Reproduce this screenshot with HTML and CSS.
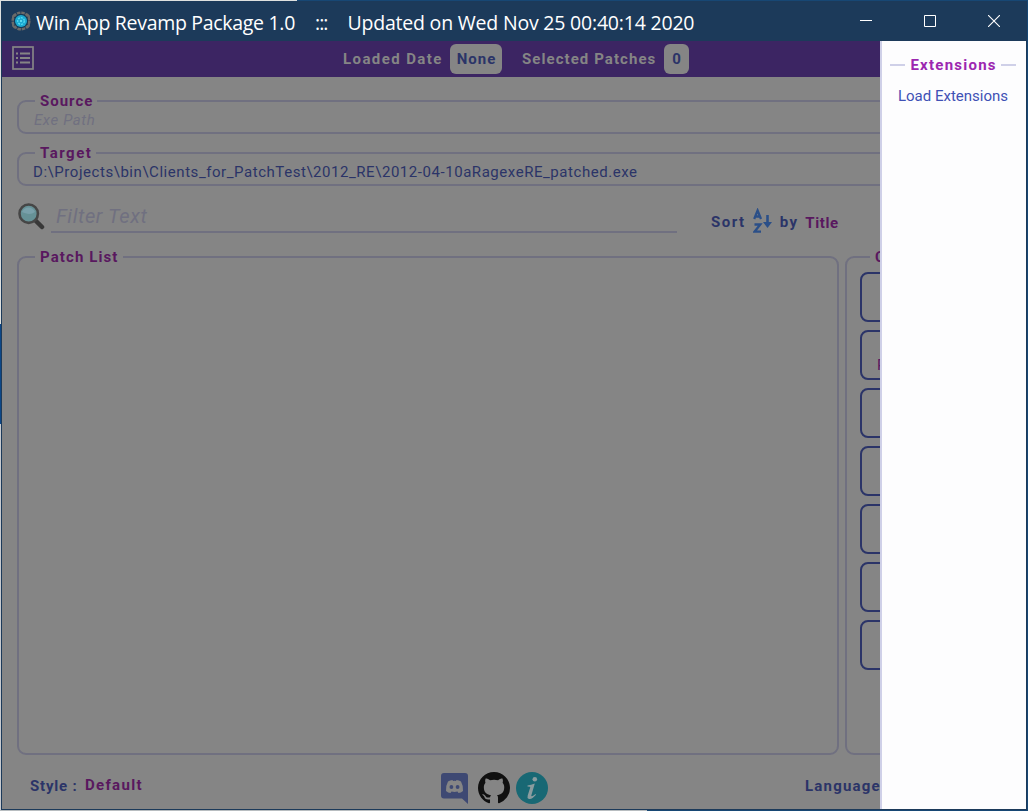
FILE: index.html
```html
<!DOCTYPE html>
<html lang="en">
<head>
<meta charset="utf-8">
<title>Win App Revamp Package 1.0</title>
<link rel="stylesheet" href="styles.css">
</head>
<body>
<div class="desktop-top"></div><div class="desktop-left"></div><div class="desktop-bottom"></div>
<div class="window">
  <header class="titlebar">
    <svg class="app-icon" width="20" height="20" viewBox="0 0 20 20"><circle cx="10" cy="10" r="8.300" fill="none" stroke="#6c6b69" stroke-width="2.600" stroke-dasharray="3.500 .85"/><path d="M4 3L2 5V8M16 3L18 5V8M4 17L2 15V12M16 17L18 15V12" fill="none" stroke="#6c6b69" stroke-width="1.800"/><circle cx="10" cy="10" r="7" fill="#143a55"/><circle cx="10" cy="10" r="6" fill="#1ba9d1"/><circle cx="10" cy="10" r="3.3" fill="none" stroke="#55dcf2" stroke-width="1.3" stroke-dasharray="2 1"/><circle cx="10" cy="10" r="1" fill="#6feafa"/></svg>
    <span class="t title-a">Win App Revamp Package 1.0</span><span class="t title-b">:::</span><span class="t title-c">Updated on Wed Nov 25 00:40:14 2020</span>
    <div class="controls">
      <svg width="12" height="12" viewBox="0 0 12 12"><path d="M0 5.5H12" stroke="#fff"/></svg>
      <svg width="12" height="12" viewBox="0 0 12 12"><path d="M.5 .5h11v11H.5z" fill="none" stroke="#fff"/></svg>
      <svg width="12" height="12" viewBox="0 0 12 12"><path d="M0 0L12 12M12 0L0 12" stroke="#fff" stroke-width="1.1"/></svg>
    </div>
  </header>
  <div class="body">
    <nav class="toolbar">
      <svg class="menu-icon" width="22" height="24" viewBox="0 0 22 24"><rect x="1" y="1" width="20" height="22" fill="none" stroke="#858585" stroke-width="1.7"/><path d="M8 7.5H18M8 12H18M8 16.5H18M4 7.5H6M4 12H6M4 16.5H6" stroke="#858585" stroke-width="1.8"/></svg>
      <span class="t bold loaded">Loaded Date</span><span class="chip chip-a"><span class="t bold none">None</span></span>
      <span class="t bold selected">Selected Patches</span><span class="chip chip-b"><span class="t bold">0</span></span>
    </nav>
    <main class="content">
      <fieldset class="field"><legend class="bold"><span class="t source">Source</span></legend><span class="t hint">Exe Path</span></fieldset>
      <fieldset class="field"><legend class="bold"><span class="t target">Target</span></legend><span class="t path">D:\Projects\bin\Clients_for_PatchTest\2012_RE\2012-04-10aRagexeRE_patched.exe</span></fieldset>
      <div class="filter-row">
        <svg class="search" width="27" height="27" viewBox="0 0 27 27"><path d="M17.5 17.5L24 24" stroke="#383838" stroke-width="4.5" stroke-linecap="round"/><circle cx="10.7" cy="10.7" r="9.2" fill="#669196" stroke="#464646" stroke-width="2.6"/><path d="M4 9c2-6 11-6 13 0-4 3-9 2-13 0z" fill="#79a0aa"/></svg>
        <div class="filter"><span class="t">Filter Text</span></div>
        <div class="sort bold"><span class="t sort-l">Sort</span>
          <svg width="19" height="26" viewBox="0 0 19 26"><path d="M1.2 11L4.6 2.500L8 11M2.3 8.500H7M1.5 16.500H7.3L1.6 23.7H8" fill="none" stroke="#2b4f88" stroke-width="2.3"/><path d="M14.5 7V17" stroke="#2b4f88" stroke-width="2.6"/><path d="M10 14h9l-4.500 6z" fill="#2b4f88"/></svg>
          <span class="t by">by</span><span class="t by-title">Title</span></div>
      </div>
      <div class="panels">
        <fieldset class="panel"><legend class="bold"><span class="t patch">Patch List</span></legend></fieldset>
        <fieldset class="panel actions"><legend class="bold">C</legend>
          <div class="buttons"><div class="btn"></div><div class="btn"><span>P</span></div><div class="btn"></div><div class="btn"></div><div class="btn"></div><div class="btn"></div><div class="btn"></div></div>
        </fieldset>
      </div>
      <footer class="footer bold">
        <span class="t style-l">Style :</span><span class="t default">Default</span>
        <div class="links">
          <svg width="27" height="32" viewBox="0 0 27 32"><path d="M3 1H24Q27 1 27 4V32L21 26.500H3Q0 26.500 0 23.500V4Q0 1 3 1Z" fill="#3e4973"/><path d="M7 9.500Q9 8 11.500 8L12 9Q13.500 8.700 15 9L15.500 8Q18 8 20 9.500Q22.500 14 22 19Q20 21 17.500 21L16.500 19.500Q13.500 20.300 10.500 19.500L9.500 21Q7 21 5 19Q4.500 14 7 9.500Z" fill="#858585"/><circle cx="10.400" cy="15" r="1.900" fill="#3e4973"/><circle cx="16.600" cy="15" r="1.900" fill="#3e4973"/></svg>
          <svg width="32" height="32" viewBox="0 0 16 16"><path fill="#101010" d="M8 0C3.580 0 0 3.580 0 8c0 3.540 2.290 6.530 5.470 7.590.4.070.55-.17.55-.38 0-.19-.01-.82-.01-1.490-2.010.37-2.530-.49-2.690-.94-.09-.23-.48-.94-.82-1.130-.28-.15-.68-.52-.01-.53.63-.01 1.080.58 1.230.82.72 1.210 1.870.87 2.330.66.07-.52.28-.87.51-1.070-1.780-.2-3.640-.89-3.640-3.950 0-.87.31-1.590.82-2.150-.08-.2-.36-1.020.08-2.120 0 0 .67-.21 2.200.82.64-.18 1.320-.27 2-.27s1.360.09 2 .27c1.530-1.040 2.200-.82 2.200-.82.44 1.100.16 1.920.08 2.120.51.56.82 1.270.82 2.150 0 3.070-1.870 3.750-3.650 3.950.29.25.54.73.54 1.480 0 1.070-.01 1.930-.01 2.200 0 .21.15.46.55.38A8.010 8.010 0 0 0 16 8c0-4.420-3.580-8-8-8z"/></svg>
          <svg width="32" height="32" viewBox="0 0 32 32"><circle cx="16" cy="16" r="16" fill="#186874"/><circle cx="18.800" cy="7.300" r="2.300" fill="#8a9c9f"/><path d="M11.500 13.500Q15 13 18.800 11.500L15.300 23.500Q15 25.500 19.500 22L20 22.700Q15.500 28 12.500 26.700Q11 26 11.700 23.500L14.200 15.500Q14.500 14.500 11.500 14.500Z" fill="#8a9c9f"/></svg>
        </div>
        <span class="t language">Language :</span>
      </footer>
    </main>
    <aside class="drawer"><div class="heading bold"><i></i><span class="t ext">Extensions</span><i></i></div><span class="t load">Load Extensions</span></aside>
  </div>
</div>
</body>
</html>
```
FILE: styles.css
```css
* { box-sizing: border-box; }
body { margin: 0; width: 1028px; height: 811px; padding: 1px; overflow: hidden; background: #174774; font-family: Roboto, "Liberation Sans", sans-serif; font-size: 15px; position: relative; }
.t { white-space: nowrap; }
.bold { font-weight: 700; }
.desktop-top { position: absolute; left: 0; top: 0; width: 297px; height: 1px; background: #dfe1df; }
.desktop-left { position: absolute; left: 0; top: 0; width: 1px; height: 811px; background: linear-gradient(#dfe1df 324px, #0c4788 324px 424px, #c8cbd0 424px); }
.desktop-bottom { position: absolute; left: 0; top: 810px; width: 647px; height: 1px; background: #b8bdc0; }
.window { position: relative; width: 1026px; height: 809px; border: 1px solid #1c3a5a; border-top: 0; background: #858585; }
.titlebar { height: 40px; background: #1c3a5a; color: #fff; display: flex; align-items: center; font: 19.5px/38px "Open Sans", sans-serif; padding: 4px 26px 0 9px; }
.app-icon { margin: -4px 5px 0 0; }
.title-a { letter-spacing: -.3px; }
.title-b { margin-left: 20px; letter-spacing: -1px; }
.title-c { margin-left: 20px; letter-spacing: -.2px; }
.controls { display: flex; gap: 52px; margin: -4px 0 0 auto; }
.body { position: relative; height: 768px; overflow: hidden; }
.toolbar { height: 36px; background: #3c2563; color: #858585; display: flex; align-items: center; padding-left: 10px; }
.menu-icon { margin-bottom: 2px; }
.loaded { margin-left: 309px; letter-spacing: 1.4px; }
.none { letter-spacing: 1px; margin-right: -1px; }
.selected { letter-spacing: 1.07px; }
.chip { height: 30px; border-radius: 6px; background: #858585; color: #2b3468; display: flex; align-items: center; justify-content: center; }
.chip-a { width: 52px; margin: 0 20px 0 7.3px; }
.chip-b { width: 25px; margin-left: 7.6px; }
.content { padding: 16px 15px 0; }
fieldset { margin: 0; min-width: 0; border: 2px solid #707080; border-radius: 9px; padding: 0; }
legend { margin-left: 16px; padding: 0 4px 0 5px; line-height: 16px; color: #59185f; }
.field { height: 41px; padding-left: 14px; line-height: 22px; margin-bottom: 11px; color: #2b3468; }
.field legend { margin-left: 2px; }
.source { letter-spacing: 1px; }
.target { letter-spacing: 1.5px; }
.patch { letter-spacing: 1.1px; }
.path { letter-spacing: .55px; }
.hint { font-style: italic; color: #707080; letter-spacing: .6px; margin-left: 1px; }
.filter-row { height: 52px; display: flex; padding-top: 7px; }
.search { margin: -1px 0 0 .5px; }
.filter { width: 626px; height: 29px; margin-left: 6.5px; padding-left: 5px; border-bottom: 2px solid #707080; font-size: 20px; line-height: 24px; font-style: italic; color: #707080; letter-spacing: .6px; }
.sort { display: flex; margin-left: 34px; padding-top: 5px; height: 31px; align-items: center; color: #2b3468; }
.sort svg { margin: -2px 8px 0 7px; }
.sort-l { letter-spacing: 1.5px; }
.by { letter-spacing: 1.4px; }
.by-title { color: #59185f; margin: 1px 0 0 7px; letter-spacing: .6px; }
.panels { display: grid; grid-template-columns: 822px 166px; gap: 6px; height: 506px; }
.panel legend { height: 16px; }
.actions legend { margin-left: 23px; }
.buttons { display: grid; gap: 8px; padding: 7px 13px; }
.btn { height: 50px; border: 2px solid #2b3468; border-radius: 8px; color: #59185f; padding: 25px 0 0 15px; line-height: 17px; }
.footer { height: 54px; display: flex; color: #2b3468; line-height: 20px; padding: 21px 0 0 13px; }
.style-l { letter-spacing: .8px; }
.default { color: #59185f; margin: -1px 0 0 7.500px; letter-spacing: 1.3px; }
.links { display: flex; gap: 10px; position: absolute; left: 439px; top: 731px; }
.links svg + svg + svg { margin-left: -4px; }
.language { position: absolute; left: 803px; letter-spacing: 1.2px; }
.drawer { position: absolute; left: 878px; top: 0; width: 146px; height: 768px; border-left: 2px solid #cfd0e8; background: #fdfdfe; padding: 14px 10px 14px 8px; display: flex; flex-direction: column; align-items: center; color: #3f51b5; line-height: 20px; }
.heading { width: 100%; display: flex; align-items: center; justify-content: space-between; color: #9c27b0; margin-bottom: 11px; }
.heading i { width: 15px; height: 2px; background: #cfd0e8; }
.ext { letter-spacing: 1.25px; margin-right: -1.25px; }
```
